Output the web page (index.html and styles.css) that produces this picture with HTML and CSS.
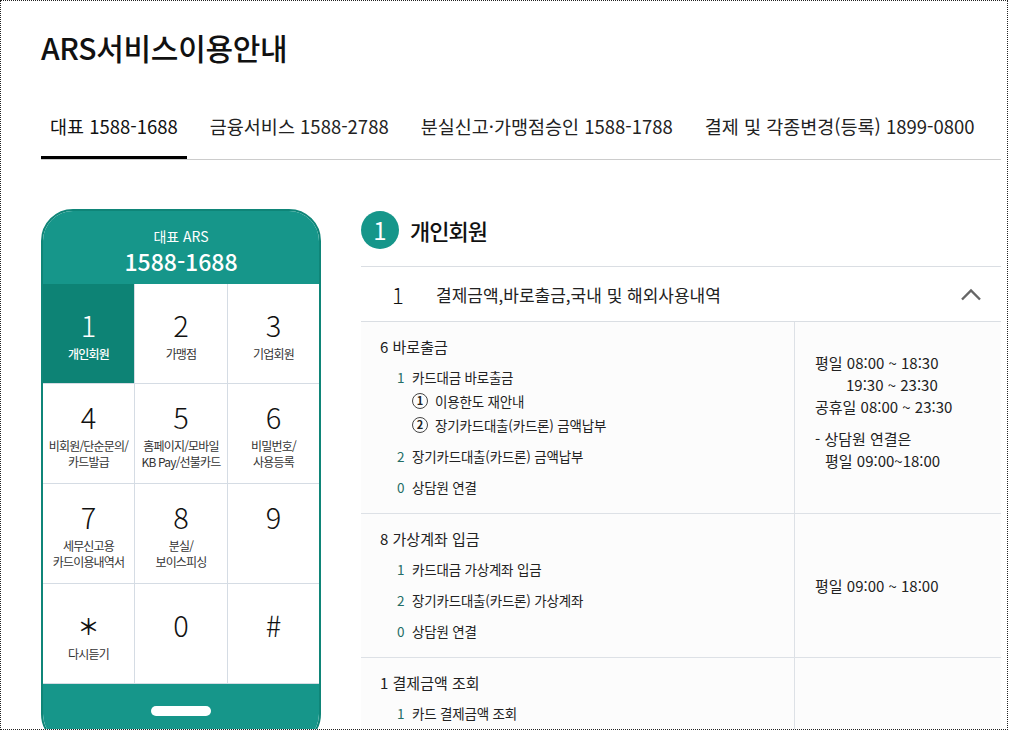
FILE: index.html
```html
<!DOCTYPE html>
<html lang="ko">
<head>
    <meta charset="UTF-8">
    <meta name="viewport" content="width=device-width, initial-scale=1.0">
    <title>ARS서비스이용안내</title>
    <link rel="stylesheet" href="styles.css">
</head>
<body>
    <div class="wrap">
        <h1 class="page-title">ARS서비스이용안내</h1>

        <ul class="tabs">
            <li class="tab active">대표 1588-1688</li>
            <li class="tab">금융서비스 1588-2788</li>
            <li class="tab">분실신고·가맹점승인 1588-1788</li>
            <li class="tab">결제 및 각종변경(등록) 1899-0800</li>
        </ul>

        <div class="content">
            <!-- phone keypad -->
            <div class="phone">
                <div class="phone-head">
                    <p class="phone-name">대표 ARS</p>
                    <p class="phone-number">1588-1688</p>
                </div>
                <div class="keypad">
                    <div class="key active">
                        <span class="key-num">1</span>
                        <span class="key-label">개인회원</span>
                    </div>
                    <div class="key">
                        <span class="key-num">2</span>
                        <span class="key-label">가맹점</span>
                    </div>
                    <div class="key">
                        <span class="key-num">3</span>
                        <span class="key-label">기업회원</span>
                    </div>
                    <div class="key">
                        <span class="key-num">4</span>
                        <span class="key-label">비회원/단순문의/<br>카드발급</span>
                    </div>
                    <div class="key">
                        <span class="key-num">5</span>
                        <span class="key-label">홈페이지/모바일<br>KB Pay/선불카드</span>
                    </div>
                    <div class="key">
                        <span class="key-num">6</span>
                        <span class="key-label">비밀번호/<br>사용등록</span>
                    </div>
                    <div class="key">
                        <span class="key-num">7</span>
                        <span class="key-label">세무신고용<br>카드이용내역서</span>
                    </div>
                    <div class="key">
                        <span class="key-num">8</span>
                        <span class="key-label">분실/<br>보이스피싱</span>
                    </div>
                    <div class="key">
                        <span class="key-num">9</span>
                        <span class="key-label blank-2"></span>
                    </div>
                    <div class="key">
                        <span class="key-num star">＊</span>
                        <span class="key-label">다시듣기</span>
                    </div>
                    <div class="key">
                        <span class="key-num">0</span>
                        <span class="key-label blank-1"></span>
                    </div>
                    <div class="key">
                        <span class="key-num">#</span>
                        <span class="key-label blank-1"></span>
                    </div>
                </div>
                <div class="phone-foot">
                    <span class="home-bar"></span>
                </div>
            </div>

            <!-- menu detail -->
            <div class="detail">
                <div class="detail-head">
                    <span class="badge">1</span>
                    <h2 class="detail-title">개인회원</h2>
                </div>

                <div class="acc-head">
                    <span class="acc-num">1</span>
                    <span class="acc-text">결제금액,바로출금,국내 및 해외사용내역</span>
                    <svg class="acc-icon" width="22" height="13" viewBox="0 0 22 13">
                        <polyline points="2,11.5 11,2.5 20,11.5" fill="none" stroke="#666" stroke-width="2.4"/>
                    </svg>
                </div>

                <div class="menu-row">
                    <div class="menu">
                        <p class="menu-title">6 바로출금</p>
                        <ul class="menu-list">
                            <li><span class="no">1</span>카드대금 바로출금
                                <ul class="sub-list">
                                    <li><span class="circle">1</span>이용한도 재안내</li>
                                    <li><span class="circle">2</span>장기카드대출(카드론) 금액납부</li>
                                </ul>
                            </li>
                            <li><span class="no">2</span>장기카드대출(카드론) 금액납부</li>
                            <li><span class="no">0</span>상담원 연결</li>
                        </ul>
                    </div>
                    <div class="time lift">
                        <p>평일 08:00 ~ 18:30</p>
                        <p class="indent">19:30 ~ 23:30</p>
                        <p>공휴일 08:00 ~ 23:30</p>
                        <p class="note">- 상담원 연결은</p>
                        <p class="note-sub">평일 09:00~18:00</p>
                    </div>
                </div>

                <div class="menu-row">
                    <div class="menu">
                        <p class="menu-title">8 가상계좌 입금</p>
                        <ul class="menu-list">
                            <li><span class="no">1</span>카드대금 가상계좌 입금</li>
                            <li><span class="no">2</span>장기카드대출(카드론) 가상계좌</li>
                            <li><span class="no">0</span>상담원 연결</li>
                        </ul>
                    </div>
                    <div class="time">
                        <p>평일 09:00 ~ 18:00</p>
                    </div>
                </div>

                <div class="menu-row">
                    <div class="menu">
                        <p class="menu-title">1 결제금액 조회</p>
                        <ul class="menu-list">
                            <li><span class="no">1</span>카드 결제금액 조회</li>
                        </ul>
                    </div>
                    <div class="time"></div>
                </div>
            </div>
        </div>
    </div>
</body>
</html>
```

FILE: styles.css
```css
* {
    margin: 0;
    padding: 0;
    box-sizing: border-box;
}

body {
    font-family: "Noto Sans CJK KR", "Noto Sans", sans-serif;
    background: #fff;
    color: #222;
}

ul {
    list-style: none;
}

.wrap {
    width: 1008px;
    height: 730px;
    border: 1px dotted #222;
    padding: 26px 6px 0 40px;
    overflow: hidden;
}

.page-title {
    font-size: 30px;
    font-weight: 500;
    line-height: 40px;
    color: #111;
    letter-spacing: -0.3px;
}

/* tabs */
.tabs {
    display: flex;
    gap: 14px;
    margin-top: 33px;
    border-bottom: 1px solid #ccc;
}

.tab {
    padding: 14px 9px 18px;
    font-size: 18.5px;
    line-height: 24px;
    color: #222;
    border-bottom: 3px solid transparent;
}

.tab.active {
    color: #111;
    border-bottom-color: #000;
}

.content {
    display: flex;
    gap: 40px;
    margin-top: 49px;
}

/* phone */
.phone {
    width: 280px;
    flex-shrink: 0;
    border: 2px solid #0f8578;
    border-radius: 32px;
    overflow: hidden;
    background: #fff;
}

.phone-head {
    height: 73px;
    background: #16968a;
    color: #fff;
    text-align: center;
    padding-top: 16px;
}

.phone-name {
    font-size: 14px;
    line-height: 18px;
}

.phone-number {
    font-size: 23px;
    font-weight: 500;
    line-height: 28px;
    margin-top: 2px;
}

.keypad {
    display: grid;
    grid-template-columns: 91px 92px 91px;
    grid-auto-rows: 99px;
    gap: 1px;
    background: #d5dce4;
    border-bottom: 1px solid #d5dce4;
}

.key {
    background: #fff;
    display: flex;
    flex-direction: column;
    align-items: center;
    justify-content: center;
    padding-top: 2px;
    text-align: center;
}

.key.active {
    background: #0d8375;
    color: #fff;
}

.key-num {
    font-size: 29px;
    line-height: 32px;
    font-weight: 300;
    color: #111;
    margin-bottom: 6px;
}

.key.active .key-num {
    color: #fff;
}

.key-num.star {
    font-size: 22px;
    font-weight: 500;
}

.key-label {
    font-size: 12px;
    line-height: 16px;
    color: #333;
    letter-spacing: -0.8px;
    white-space: nowrap;
}

.key.active .key-label {
    color: #fff;
    font-weight: 500;
}

.key-label.blank-1 {
    height: 16px;
}

.key-label.blank-2 {
    height: 32px;
}

.phone-foot {
    height: 60px;
    background: #16968a;
    display: flex;
    justify-content: center;
    padding-top: 22px;
}

.home-bar {
    width: 60px;
    height: 10px;
    border-radius: 5px;
    background: #fff;
}

/* detail */
.detail {
    flex: 1;
}

.detail-head {
    display: flex;
    align-items: center;
    gap: 11px;
    padding-top: 2px;
    margin-bottom: 17px;
}

.badge {
    width: 38px;
    height: 38px;
    border-radius: 50%;
    background: #16968a;
    color: #fff;
    font-size: 24px;
    line-height: 38px;
    text-align: center;
}

.detail-title {
    font-size: 22px;
    font-weight: 500;
    letter-spacing: -1px;
    color: #111;
}

.acc-head {
    display: flex;
    align-items: center;
    height: 56px;
    padding: 0 19px 0 31px;
    border-top: 1px solid #dadee3;
    border-bottom: 1px solid #dadee3;
}

.acc-num {
    width: 44px;
    font-size: 22px;
    font-weight: 300;
    color: #111;
}

.acc-text {
    flex: 1;
    font-size: 17px;
    color: #222;
}

.menu-row {
    display: flex;
    background: #fcfcfc;
    border-bottom: 1px solid #dde1e6;
}

.menu {
    width: 434px;
    padding: 14px 19px 14px;
    border-right: 1px solid #dde1e6;
}

.menu-title {
    font-size: 15px;
    line-height: 22px;
    color: #222;
}

.menu-list {
    padding-left: 17px;
}

.menu-list > li {
    margin-top: 8px;
    font-size: 13.5px;
    line-height: 23px;
    letter-spacing: -0.2px;
    color: #222;
}

.no {
    display: inline-block;
    width: 15px;
    color: #236d66;
    letter-spacing: 0;
}

.sub-list {
    padding-left: 15px;
}

.sub-list li {
    line-height: 24px;
    display: flex;
    align-items: center;
}

.circle {
    width: 16px;
    height: 16px;
    border: 1.3px solid #444;
    border-radius: 50%;
    font-size: 11px;
    font-weight: 700;
    line-height: 13px;
    text-align: center;
    letter-spacing: 0;
    margin-right: 7px;
}

.time {
    flex: 1;
    display: flex;
    flex-direction: column;
    justify-content: center;
    padding-left: 20px;
    font-size: 15px;
    line-height: 22px;
    color: #222;
}

.time.lift {
    padding-bottom: 12px;
}

.time .indent {
    padding-left: 31px;
}

.time .note {
    margin-top: 10px;
}

.time .note-sub {
    padding-left: 10px;
}
```
